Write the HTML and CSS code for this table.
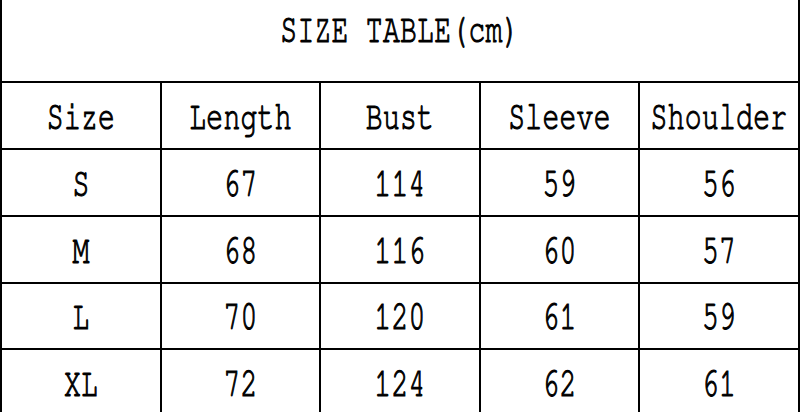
FILE: index.html
```html
<!DOCTYPE html>
<html>
<head>
<meta charset="utf-8">
<link rel="stylesheet" href="styles.css">
</head>
<body>
<div class="table">
  <div class="cell title"><span class="t">SIZE TABLE(cm)</span></div>
  <div class="cell"><span class="t">Size</span></div>
  <div class="cell"><span class="t">Length</span></div>
  <div class="cell"><span class="t">Bust</span></div>
  <div class="cell"><span class="t">Sleeve</span></div>
  <div class="cell"><span class="t">Shoulder</span></div>

  <div class="cell"><span class="t">S</span></div>
  <div class="cell"><span class="t">67</span></div>
  <div class="cell"><span class="t">114</span></div>
  <div class="cell"><span class="t">59</span></div>
  <div class="cell"><span class="t">56</span></div>

  <div class="cell"><span class="t">M</span></div>
  <div class="cell"><span class="t">68</span></div>
  <div class="cell"><span class="t">116</span></div>
  <div class="cell"><span class="t">60</span></div>
  <div class="cell"><span class="t">57</span></div>

  <div class="cell"><span class="t">L</span></div>
  <div class="cell"><span class="t">70</span></div>
  <div class="cell"><span class="t">120</span></div>
  <div class="cell"><span class="t">61</span></div>
  <div class="cell"><span class="t">59</span></div>

  <div class="cell"><span class="t">XL</span></div>
  <div class="cell"><span class="t">72</span></div>
  <div class="cell"><span class="t">124</span></div>
  <div class="cell"><span class="t">62</span></div>
  <div class="cell"><span class="t">61</span></div>
</div>
</body>
</html>
```
FILE: styles.css
```css
html, body {
  margin: 0;
  padding: 0;
  background: #fff;
  overflow: hidden;
}
.table {
  width: 800px;
  box-sizing: border-box;
  display: grid;
  grid-template-columns: 158px 157px 158px 157px 158px;
  grid-template-rows: 81px 65px 65px 65px 64px 65px;
  gap: 2px;
  padding: 0 2px 2px 2px;
  background: #000;
}
.cell {
  background: #fff;
  display: flex;
  align-items: center;
  justify-content: center;
  font-family: "Nimbus Mono PS", "Nimbus Mono L", "FreeMono", "Courier New", "Liberation Mono", monospace;
  font-size: 28px;
  color: #000;
  padding-top: 2px;
  box-sizing: border-box;
}
.title {
  grid-column: 1 / 6;
  align-items: flex-start;
  padding-top: 14px;
}
.t {
  display: inline-block;
  transform: scaleY(1.45);
  -webkit-text-stroke: 0.8px #000;
  letter-spacing: 0.3px;
  line-height: 32px;
}
```
